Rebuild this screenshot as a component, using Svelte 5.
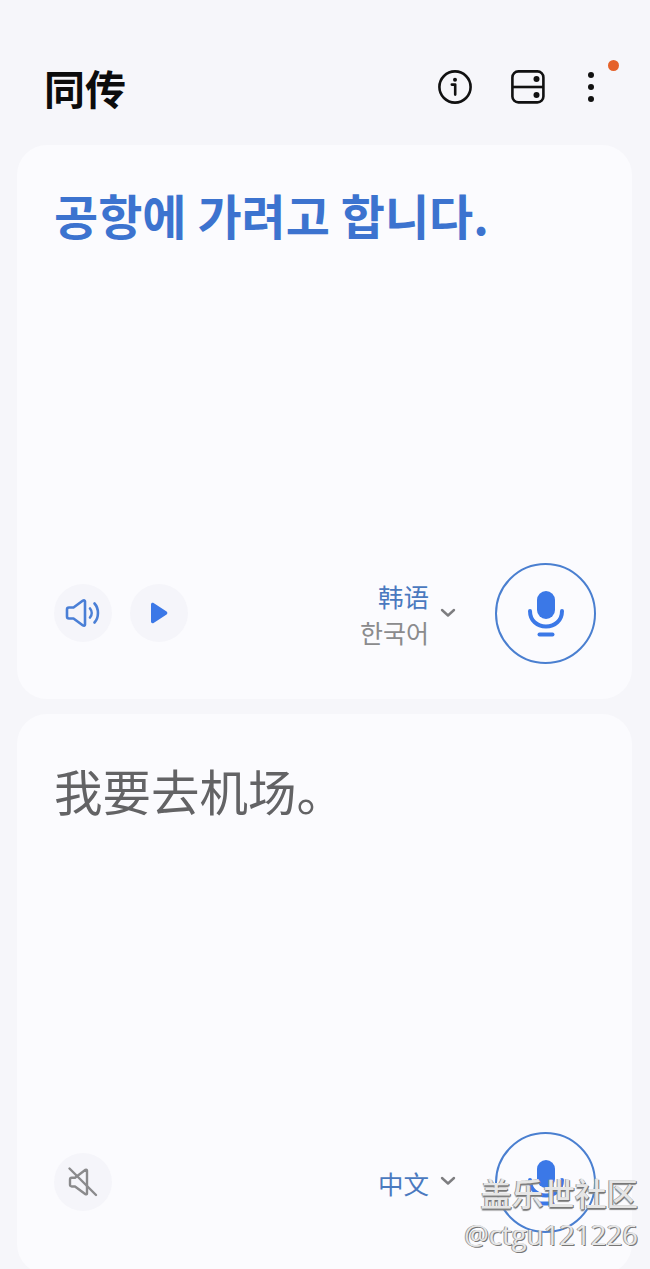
<script>
  const labels = { source: '공항에 가려고 합니다.', target: '我要去机场。' };
</script>

{#snippet mic()}
  <button class="mic" aria-label="mic">
    <svg width="40" height="48" viewBox="0 0 40 48">
      <rect x="11" y="1" width="18" height="28" rx="9" fill="#3b78e7" />
      <path d="M4 21c0 9.500 7 15.500 16 15.500S36 30.500 36 21" fill="none" stroke="#3b78e7" stroke-width="4" stroke-linecap="round" />
      <path d="M13.500 44.500h13" fill="none" stroke="#3b78e7" stroke-width="4" stroke-linecap="round" />
    </svg>
  </button>
{/snippet}

{#snippet chevron()}
  <svg class="chev" width="16" height="10" viewBox="0 0 16 10">
    <path d="M2 2l6 5.500L14 2" fill="none" stroke="#7d7d80" stroke-width="2.400" stroke-linecap="round" stroke-linejoin="round" />
  </svg>
{/snippet}

<main>
  <header>
    <h1>同传</h1>
    <div class="actions">
      <svg width="36" height="36" viewBox="0 0 36 36" fill="none" stroke="#111" stroke-width="2.600">
        <circle cx="18" cy="18" r="15.600" />
        <circle cx="18" cy="10.800" r="2" fill="#111" stroke="none" />
        <path d="M14.800 15.600H18.200V25.600" stroke-linecap="round" stroke-linejoin="round" />
      </svg>
      <svg width="36" height="36" viewBox="0 0 36 36" fill="none" stroke="#111" stroke-width="2.600">
        <rect x="2.400" y="2.400" width="31" height="31" rx="6" />
        <path d="M2.400 18H33.400" />
        <circle cx="26.500" cy="10" r="3" fill="#111" stroke="none" />
        <circle cx="26.500" cy="26" r="3" fill="#111" stroke="none" />
      </svg>
      <div class="more">
        <i></i><i></i><i></i>
        <span class="dot"></span>
      </div>
    </div>
  </header>

  <section class="card">
    <p class="source">{labels.source}</p>
    <div class="row">
      <div class="round-btns">
        <button class="round" aria-label="speaker">
          <svg width="36" height="30" viewBox="0 0 36 30" fill="none" stroke="#4a7fd6" stroke-width="2.600" stroke-linecap="round" stroke-linejoin="round">
            <path d="M2 11.500c0-1.200.8-2 2-2h4.500L18 2.500c1-.6 2-.2 2 1v23c0 1.200-1 1.600-2 1l-9.500-7H4c-1.200 0-2-.8-2-2z" />
            <path d="M25 10.500c2.200 2.600 2.200 6.400 0 9" />
            <path d="M29.500 5.500c4.600 5 4.600 14 0 19" />
          </svg>
        </button>
        <button class="round" aria-label="play">
          <svg width="20" height="24" viewBox="0 0 20 24">
            <path d="M2 3.500c0-1.500 1.400-2.200 2.600-1.400l13 8.500c1 .7 1 2.100 0 2.800l-13 8.500C3.400 22.700 2 22 2 20.500z" fill="#3b78e7" />
          </svg>
        </button>
      </div>
      <div class="lang">
        <div class="names">
          <span class="name">韩语</span>
          <span class="native">한국어</span>
        </div>
        {@render chevron()}
      </div>
      {@render mic()}
    </div>
  </section>

  <section class="card">
    <p class="target">{labels.target}</p>
    <div class="row">
      <div class="round-btns">
        <button class="round" aria-label="muted">
          <svg width="32" height="32" viewBox="0 0 32 32" fill="none" stroke="#8a8a8c" stroke-width="2.400" stroke-linecap="round" stroke-linejoin="round">
            <path d="M3 13.500c0-1 .7-1.700 1.700-1.700H8l10.500-8c.8-.5 1.500 0 1.500 .8v22.800c0 .8-.7 1.300-1.500 .8L8 20.500H4.700c-1 0-1.700-.7-1.700-1.700z" />
            <path d="M2.500 2.500L29 29" />
          </svg>
        </button>
      </div>
      <div class="lang single">
        <div class="names">
          <span class="name">中文</span>
        </div>
        {@render chevron()}
      </div>
      {@render mic()}
    </div>
  </section>

  <div class="watermark">
    <span class="wm-title">盖乐世社区</span>
    <span class="wm-user">@ctgu121226</span>
  </div>
</main>

<style>
  :global(body) {
    margin: 0;
    background: #f6f6fa;
  }

  main {
    position: relative;
    height: 1269px;
    overflow: hidden;
    padding: 0 18px 0 17px;
    box-sizing: border-box;
    font-family: "Noto Sans CJK SC", "Noto Sans", sans-serif;
  }

  header {
    height: 145px;
    display: flex;
    align-items: center;
    justify-content: space-between;
    padding: 29px 0 0 28px;
    box-sizing: border-box;
  }

  h1 {
    margin: 0 0 0 -1px;
    font-size: 41px;
    line-height: 48px;
    font-weight: 700;
    color: #0c0c0c;
  }

  .actions {
    display: flex;
    align-items: center;
    gap: 36.500px;
    padding-right: 23px;
  }

  .more {
    position: relative;
    display: flex;
    flex-direction: column;
    gap: 6px;
    margin-left: 6px;
    margin-right: 15px;
  }

  .more i {
    width: 6px;
    height: 6px;
    border-radius: 50%;
    background: #111;
  }

  .dot {
    position: absolute;
    top: -12px;
    left: 19.500px;
    width: 11px;
    height: 11px;
    border-radius: 50%;
    background: #e5622a;
  }

  .card {
    height: 554px;
    margin-bottom: 15px;
    background: #fbfbfe;
    border-radius: 30px;
    padding: 0 36px 35px 37px;
    box-sizing: border-box;
    display: flex;
    flex-direction: column;
    justify-content: space-between;
  }

  .card:last-of-type {
    height: 560px;
    margin-bottom: 0;
    padding-bottom: 41px;
  }

  p {
    margin: 0;
  }

  .source {
    padding-top: 34px;
    font-family: "Noto Sans CJK KR", sans-serif;
    font-size: 48px;
    line-height: 70px;
    font-weight: 700;
    color: #3c73cf;
  }

  .target {
    padding-top: 38px;
    font-size: 48.500px;
    line-height: 76px;
    font-weight: 400;
    color: #636365;
  }

  .row {
    display: flex;
    align-items: center;
  }

  .round-btns {
    display: flex;
    gap: 18px;
    flex: 1;
    margin-top: -2px;
  }

  button {
    border: none;
    padding: 0;
    background: none;
    display: flex;
    align-items: center;
    justify-content: center;
  }

  .round {
    width: 58px;
    height: 58px;
    border-radius: 50%;
    background: #f5f5fa;
  }

  .lang {
    display: flex;
    align-items: center;
    gap: 11px;
    margin-right: 39px;
  }

  .names {
    display: flex;
    flex-direction: column;
    align-items: flex-end;
  }

  .name {
    font-size: 25.500px;
    line-height: 36px;
    color: #4a79bf;
  }

  .native {
    font-family: "Noto Sans CJK KR", sans-serif;
    font-size: 25px;
    line-height: 36px;
    color: #8b8b8d;
  }

  .chev {
    margin-top: -2px;
  }

  .single .chev {
    margin-top: -4px;
  }

  .mic {
    width: 101px;
    height: 101px;
    border: 2.500px solid #4a7fd0;
    border-radius: 50%;
    box-sizing: border-box;
  }

  .watermark {
    position: absolute;
    top: 1171px;
    right: 12px;
    display: flex;
    flex-direction: column;
    align-items: flex-end;
  }

  .wm-title {
    font-size: 31.500px;
    line-height: 42px;
    font-weight: 500;
    color: #e6e6e6;
    text-shadow: 1px 1px 0 #777, -1px 0 0 #999, 0 2px 1px #888;
  }

  .wm-user {
    font-family: "Open Sans", sans-serif;
    font-size: 27.500px;
    line-height: 38px;
    margin-top: 3px;
    color: #e6e6e6;
    text-shadow: 1px 1px 0 #777, -1px 0 0 #999;
  }
</style>
